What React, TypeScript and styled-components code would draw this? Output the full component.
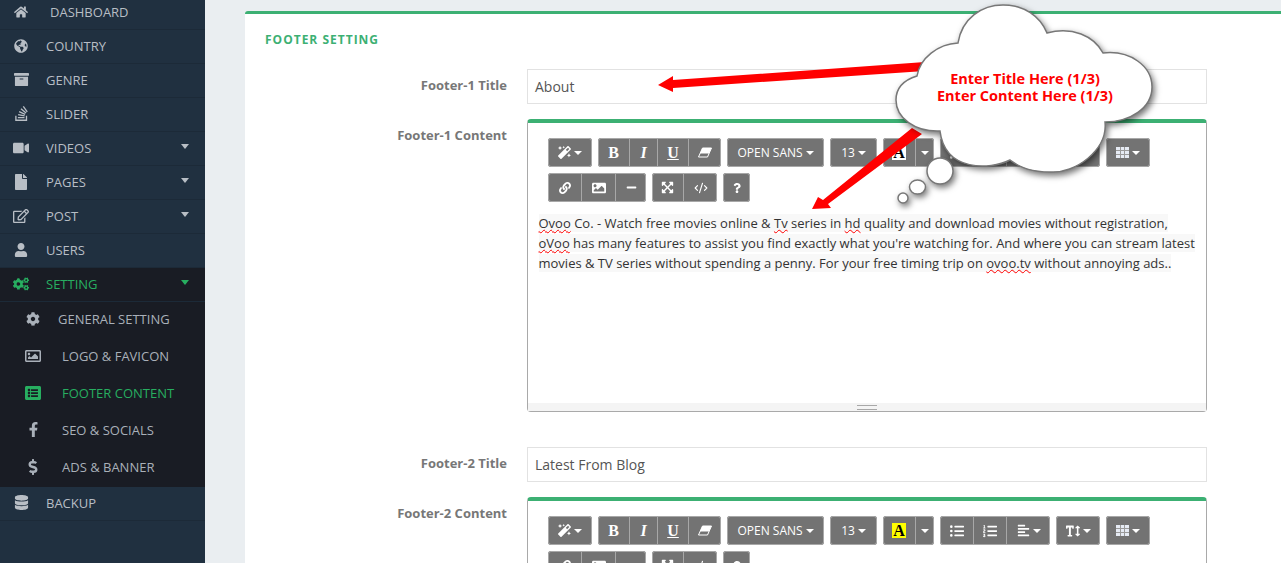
import React from "react";
import styled, { createGlobalStyle } from "styled-components";
import { IconType } from "react-icons";
import {
  FaHome,
  FaGlobeAmericas,
  FaArchive,
  FaStackOverflow,
  FaVideo,
  FaFile,
  FaRegEdit,
  FaUser,
  FaCogs,
  FaCog,
  FaRegImage,
  FaListAlt,
  FaFacebookF,
  FaDollarSign,
  FaDatabase,
  FaMagic,
  FaLink,
  FaImage,
  FaMinus,
  FaExpandArrowsAlt,
  FaQuestion,
  FaListUl,
  FaListOl,
  FaAlignLeft,
  FaTextHeight,
} from "react-icons/fa";
import { CodeXml } from "lucide-react";

const GREEN = "#3cb073";

const GlobalStyle = createGlobalStyle`
  html, body {
    margin: 0;
    padding: 0;
    height: 100%;
    overflow: hidden;
    background: #eaeef1;
    font-family: "Open Sans", "Liberation Sans", sans-serif;
  }
  * { box-sizing: border-box; }
`;

const topMenu: { label: string; icon: IconType; caret?: boolean; shift?: number; size: number }[] = [
  { label: "Dashboard", icon: FaHome, shift: 4, size: 14 },
  { label: "Country", icon: FaGlobeAmericas, size: 14 },
  { label: "Genre", icon: FaArchive, size: 15 },
  { label: "Slider", icon: FaStackOverflow, size: 17 },
  { label: "Videos", icon: FaVideo, caret: true, size: 16 },
  { label: "Pages", icon: FaFile, caret: true, size: 16 },
  { label: "Post", icon: FaRegEdit, caret: true, size: 16 },
  { label: "Users", icon: FaUser, size: 14 },
];

const subMenu: { label: string; icon: IconType; active?: boolean; shift?: number; size: number }[] = [
  { label: "General Setting", icon: FaCog, shift: -4, size: 14 },
  { label: "Logo & Favicon", icon: FaRegImage, size: 16 },
  { label: "Footer Content", icon: FaListAlt, active: true, size: 16 },
  { label: "SEO & Socials", icon: FaFacebookF, size: 15 },
  { label: "Ads & Banner", icon: FaDollarSign, size: 16 },
];

function EraserIcon() {
  return (
    <svg width="14" height="11" viewBox="0 0 14 11">
      <path d="M4.5 1 L13.5 1 L9.5 10 L0.5 10 Z" fill="none" stroke="#fff" strokeWidth="1" />
      <path d="M4.5 1 L13.5 1 L11 6.5 L2 6.5 Z" fill="#fff" />
    </svg>
  );
}

function TableIcon() {
  return (
    <svg width="13" height="11" viewBox="0 0 13 11">
      <rect x="0" y="0" width="13" height="11" fill="#e6ebf4" />
      <path d="M0 3.5H13M0 7.5H13M4.5 0V11M8.5 0V11" stroke="#9a9a9a" strokeWidth="1" />
    </svg>
  );
}

function Toolbar(props: { highlight?: boolean }) {
  return (
    <ToolRow>
      <ToolGroup>
        <ToolButton $w={44}>
          <FaMagic size={13} />
          <Caret />
        </ToolButton>
      </ToolGroup>
      <ToolGroup>
        <ToolButton $w={31}>
          <SerifGlyph>B</SerifGlyph>
        </ToolButton>
        <ToolButton $w={28}>
          <SerifGlyph $italic>I</SerifGlyph>
        </ToolButton>
        <ToolButton $w={31}>
          <SerifGlyph $under>U</SerifGlyph>
        </ToolButton>
        <ToolButton $w={33}>
          <EraserIcon />
        </ToolButton>
      </ToolGroup>
      <ToolGroup>
        <ToolButton $w={97}>
          OPEN SANS
          <Caret />
        </ToolButton>
      </ToolGroup>
      <ToolGroup>
        <ToolButton $w={47}>
          13
          <Caret />
        </ToolButton>
      </ToolGroup>
      <ToolGroup>
        <ToolButton $w={32}>
          <ColorGlyph $highlight={props.highlight}>A</ColorGlyph>
        </ToolButton>
        <ToolButton $w={19}>
          <Caret $flush />
        </ToolButton>
      </ToolGroup>
      <ToolGroup>
        <ToolButton $w={33}>
          <FaListUl size={14} />
        </ToolButton>
        <ToolButton $w={33}>
          <FaListOl size={14} />
        </ToolButton>
        <ToolButton $w={44}>
          <FaAlignLeft size={13} />
          <Caret />
        </ToolButton>
      </ToolGroup>
      <ToolGroup>
        <ToolButton $w={44}>
          <FaTextHeight size={14} />
          <Caret />
        </ToolButton>
      </ToolGroup>
      <ToolGroup>
        <ToolButton $w={44}>
          <TableIcon />
          <Caret />
        </ToolButton>
      </ToolGroup>
      <ToolGroup>
        <ToolButton $w={33}>
          <FaLink size={12} />
        </ToolButton>
        <ToolButton $w={34}>
          <FaImage size={14} />
        </ToolButton>
        <ToolButton $w={31}>
          <FaMinus size={11} />
        </ToolButton>
      </ToolGroup>
      <ToolGroup>
        <ToolButton $w={31}>
          <FaExpandArrowsAlt size={13} />
        </ToolButton>
        <ToolButton $w={34}>
          <CodeXml size={14} strokeWidth={2} />
        </ToolButton>
      </ToolGroup>
      <ToolGroup>
        <ToolButton $w={27}>
          <FaQuestion size={10} />
        </ToolButton>
      </ToolGroup>
    </ToolRow>
  );
}

function Annotation() {
  return (
    <>
      <OverlaySvg width="1281" height="563" viewBox="0 0 1281 563">
        <polygon points="658,85 673,76 673,80 925,62 925,71 673,88 673,92" fill="#ff0000" />
        <polygon points="812,209 818,197 823,200 912,128 922,134 828,204 831,208" fill="#ff0000" />
      </OverlaySvg>
      <CloudSvg width="1281" height="563" viewBox="0 0 1281 563">
        <path d="M958 43 C962 18 982 5 1003 5 C1024 5 1040 16 1047 33 C1072 26 1094 36 1103 53 C1130 50 1152 66 1152 87 C1152 108 1130 122 1105 122 C1108 150 1075 174 1050 172 C1035 172 1020 168 1010 160 C990 170 945 172 940 131 C915 132 896 118 896 100 C896 88 904 80 917 76 C920 58 938 44 958 43 Z" />
        <circle cx="940" cy="171" r="13" />
        <ellipse cx="917.5" cy="187" rx="8" ry="7" />
        <circle cx="903" cy="198" r="5" />
      </CloudSvg>
      <CloudText>
        Enter Title Here (1/3)
        <br />
        Enter Content Here (1/3)
      </CloudText>
    </>
  );
}

export default function App() {
  return (
    <Page>
      <GlobalStyle />
      <Sidebar>
        {topMenu.map((item) => (
          <MenuRow key={item.label} $first={item.label === "Dashboard"}>
            <MenuIcon>
              <item.icon size={item.size} />
            </MenuIcon>
            <MenuLabel $shift={item.shift}>{item.label}</MenuLabel>
            {item.caret && <MenuCaret />}
          </MenuRow>
        ))}
        <MenuRow $active>
          <MenuIcon>
            <FaCogs size={16} />
          </MenuIcon>
          <MenuLabel>Setting</MenuLabel>
          <MenuCaret />
        </MenuRow>
        <SubList>
          {subMenu.map((item) => (
            <SubRow key={item.label} $active={item.active}>
              <SubIcon>
                <item.icon size={item.size} />
              </SubIcon>
              <SubLabel $shift={item.shift}>{item.label}</SubLabel>
            </SubRow>
          ))}
        </SubList>
        <MenuRow>
          <MenuIcon>
            <FaDatabase size={15} />
          </MenuIcon>
          <MenuLabel>Backup</MenuLabel>
        </MenuRow>
      </Sidebar>
      <Main>
        <Panel>
          <PanelTitle>Footer Setting</PanelTitle>
          <FormRow>
            <FieldLabel>Footer-1 Title</FieldLabel>
            <TextField>About</TextField>
          </FormRow>
          <FormRow>
            <FieldLabel>Footer-1 Content</FieldLabel>
            <Editor>
              <Toolbar />
              <EditArea>
                <Pasted>
                  <Misspelled>Ovoo</Misspelled> Co. - Watch free movies online &amp;{" "}
                  <Misspelled>Tv</Misspelled> series in <Misspelled>hd</Misspelled> quality and
                  download movies without registration, <Misspelled>oVoo</Misspelled> has many
                  features to assist you find exactly what you're watching for. And where you can
                  stream latest movies &amp; TV series without spending a penny. For your free
                  timing trip on <Misspelled>ovoo.tv</Misspelled> without annoying ads..
                </Pasted>
              </EditArea>
              <ResizeBar>
                <Grip />
              </ResizeBar>
            </Editor>
          </FormRow>
          <Spacer />
          <FormRow>
            <FieldLabel>Footer-2 Title</FieldLabel>
            <TextField>Latest From Blog</TextField>
          </FormRow>
          <FormRow>
            <FieldLabel>Footer-2 Content</FieldLabel>
            <Editor>
              <Toolbar highlight />
            </Editor>
          </FormRow>
        </Panel>
      </Main>
      <Annotation />
    </Page>
  );
}

const Page = styled.div`
  position: relative;
  display: flex;
  width: 1281px;
  height: 563px;
  overflow: hidden;
  background: #eaeef1;
`;

const Sidebar = styled.nav`
  flex: 0 0 205px;
  height: 563px;
  background: #203040;
`;

const MenuRow = styled.div<{ $first?: boolean; $active?: boolean }>`
  position: relative;
  display: flex;
  align-items: center;
  height: ${({ $first }) => ($first ? "30px" : "34px")};
  padding-bottom: ${({ $first }) => ($first ? "5px" : "2px")};
  border-bottom: 1px solid #1c2a38;
  background: ${({ $active }) => ($active ? "#191c24" : "transparent")};
  color: ${({ $active }) => ($active ? "#27ae60" : "#b8bec5")};
`;

const MenuIcon = styled.span`
  display: flex;
  justify-content: center;
  flex: 0 0 42px;
  color: inherit;
`;

const MenuLabel = styled.span<{ $shift?: number }>`
  margin-left: ${({ $shift }) => 4 + ($shift ?? 0)}px;
  font-size: 13px;
  text-transform: uppercase;
`;

const MenuCaret = styled.span`
  position: absolute;
  right: 16px;
  top: 12px;
  width: 0;
  height: 0;
  border-left: 4.5px solid transparent;
  border-right: 4.5px solid transparent;
  border-top: 5px solid currentColor;
`;

const SubList = styled.div`
  background: #191c24;
`;

const SubRow = styled.div<{ $active?: boolean }>`
  display: flex;
  align-items: center;
  height: 37px;
  padding-bottom: 4px;
  color: ${({ $active }) => ($active ? "#27ae60" : "#a9b0b9")};
`;

const SubIcon = styled.span`
  display: flex;
  justify-content: center;
  flex: 0 0 66px;
`;

const SubLabel = styled.span<{ $shift?: number }>`
  margin-left: ${({ $shift }) => -4 + ($shift ?? 0)}px;
  font-size: 13px;
  text-transform: uppercase;
`;

const Main = styled.main`
  flex: 1;
  min-width: 0;
  padding: 11px 0 0 40px;
`;

const Panel = styled.section`
  height: 800px;
  padding: 0 0 0 20px;
  background: #fff;
  border-top: 3px solid ${GREEN};
  border-radius: 3px 0 0 0;
`;

const PanelTitle = styled.h2`
  margin: 0;
  height: 55px;
  padding-top: 17px;
  font-size: 12px;
  line-height: 18px;
  font-weight: 700;
  letter-spacing: 1px;
  text-transform: uppercase;
  color: ${GREEN};
`;

const FormRow = styled.div`
  display: grid;
  grid-template-columns: 242px 680px;
  column-gap: 20px;
  margin-bottom: 15px;
`;

const Spacer = styled.div`
  height: 20px;
`;

const FieldLabel = styled.label`
  padding-top: 7px;
  font-size: 13px;
  line-height: 18px;
  font-weight: 700;
  text-align: right;
  color: #777;
`;

const TextField = styled.div`
  height: 35px;
  padding: 0 7px;
  border: 1px solid #e2e2e2;
  font-size: 14px;
  line-height: 34px;
  color: #555;
`;

const Editor = styled.div`
  display: flex;
  flex-direction: column;
  height: 293px;
  border: 1px solid #a9a9a9;
  border-top: 4px solid ${GREEN};
  border-radius: 4px;
`;

const ToolRow = styled.div`
  display: flex;
  flex-wrap: wrap;
  gap: 6px;
  padding: 15px 20px 0;
`;

const ToolGroup = styled.div`
  display: flex;
  height: 29px;
  border-radius: 3px;
  overflow: hidden;
  outline: 1px solid #a8a8a8;
  outline-offset: -1px;
`;

const ToolButton = styled.div<{ $w: number }>`
  display: flex;
  align-items: center;
  justify-content: center;
  width: ${({ $w }) => $w}px;
  background: #737373;
  color: #fff;
  font-size: 12px;
  & + & {
    border-left: 1px solid #a8a8a8;
  }
`;

const Caret = styled.span<{ $flush?: boolean }>`
  margin-left: ${({ $flush }) => ($flush ? "0" : "3px")};
  width: 0;
  height: 0;
  border-left: 4px solid transparent;
  border-right: 4px solid transparent;
  border-top: 4px solid #fff;
`;

const SerifGlyph = styled.span<{ $italic?: boolean; $under?: boolean }>`
  font-family: "Liberation Serif", serif;
  font-size: 16px;
  font-weight: 700;
  font-style: ${({ $italic }) => ($italic ? "italic" : "normal")};
  text-decoration: ${({ $under }) => ($under ? "underline" : "none")};
`;

const ColorGlyph = styled.span<{ $highlight?: boolean }>`
  padding: 0 1px;
  font-family: "Liberation Serif", serif;
  font-size: 16px;
  line-height: 15px;
  font-weight: 700;
  color: #000;
  background: ${({ $highlight }) => ($highlight ? "#ffff00" : "#fff")};
`;

const EditArea = styled.div`
  flex: 1;
  padding: 11px 8px 0 10.5px;
  font-size: 13px;
  line-height: 20px;
  color: #333;
`;

const Pasted = styled.span`
  background: #f8f8f8;
`;

const Misspelled = styled.span`
  text-decoration: underline wavy #ff0000 1px;
  text-underline-offset: 1px;
`;

const ResizeBar = styled.div`
  display: flex;
  align-items: center;
  justify-content: center;
  flex: 0 0 8px;
  background: #f4f4f4;
`;

const Grip = styled.span`
  width: 20px;
  height: 5px;
  border-top: 1px solid #a8a8a8;
  border-bottom: 1px solid #a8a8a8;
`;

const OverlaySvg = styled.svg`
  position: absolute;
  left: 0;
  top: 0;
`;

const CloudSvg = styled.svg`
  position: absolute;
  left: 0;
  top: 0;
  filter: drop-shadow(2px 3px 3px rgba(0, 0, 0, 0.55));
  fill: #fff;
  stroke: #777;
  stroke-width: 1.5;
`;

const CloudText = styled.div`
  position: absolute;
  left: 925px;
  top: 70px;
  width: 200px;
  font-size: 14.5px;
  line-height: 17px;
  font-weight: 700;
  text-align: center;
  color: #ff0000;
`;
